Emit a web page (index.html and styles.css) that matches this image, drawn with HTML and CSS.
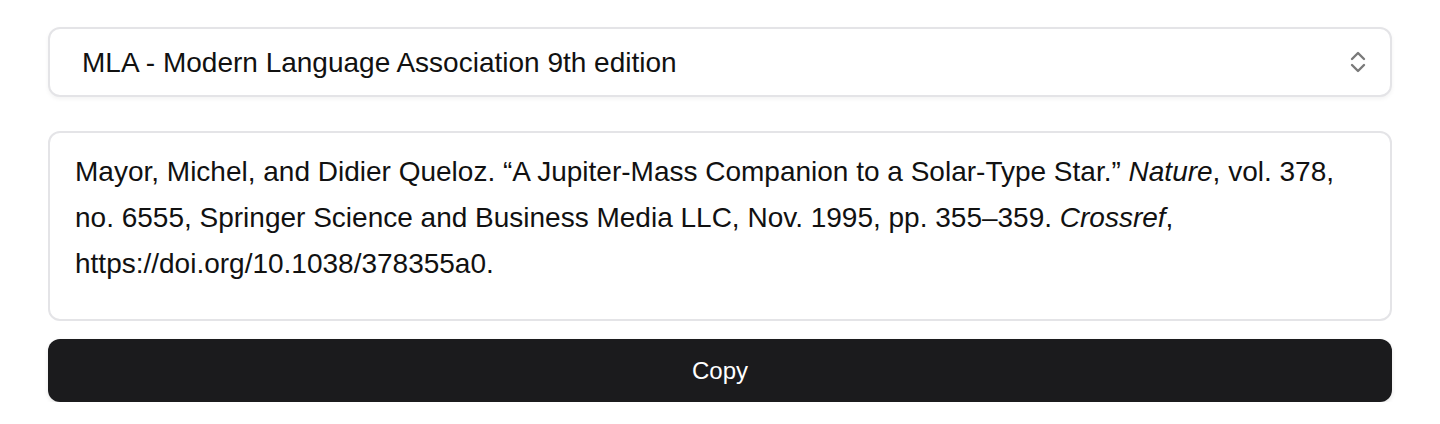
FILE: index.html
```html
<!DOCTYPE html>
<html lang="en">
<head>
    <meta charset="UTF-8">
    <meta name="viewport" content="width=device-width, initial-scale=1.0">
    <title>Citation</title>
    <link rel="stylesheet" href="styles.css">
</head>
<body>
    <div class="cite-box">
        <div class="style-select">
            <select name="style">
                <option value="mla" selected>MLA - Modern Language Association 9th edition</option>
                <option value="apa">APA - American Psychological Association 7th edition</option>
                <option value="chicago">Chicago Manual of Style 17th edition</option>
            </select>
            <svg class="select-icon" width="16" height="24" viewBox="0 0 16 24" fill="none" stroke="#7a7a7a" stroke-width="2.4" stroke-linecap="round" stroke-linejoin="round">
                <path d="M2 9 L8 3 L14 9"/>
                <path d="M2 15 L8 21 L14 15"/>
            </svg>
        </div>

        <div class="citation">
            Mayor, Michel, and Didier Queloz. “A Jupiter-Mass Companion to a Solar-Type Star.” <i>Nature</i>, vol. 378, no. 6555, Springer Science and Business Media LLC, Nov. 1995, pp. 355–359. <i>Crossref</i>, https://doi.org/10.1038/378355a0.
        </div>

        <button type="button" class="copy-btn">Copy</button>
    </div>
</body>
</html>
```

FILE: styles.css
```css
body {
    margin: 0;
    font-family: "Liberation Sans", Arial, sans-serif;
    background: #fff;
    color: #111;
}

.cite-box {
    display: flex;
    flex-direction: column;
    padding: 27px 48px 0 48px;
}

.style-select {
    position: relative;
    margin-bottom: 34px;
}

select {
    appearance: none;
    -webkit-appearance: none;
    width: 100%;
    height: 70px;
    background: #fff;
    border: 2px solid #e4e4e7;
    border-radius: 12px;
    box-shadow: 0 2px 4px rgba(0, 0, 0, 0.05);
    padding: 0 32px;
    font-family: inherit;
    font-size: 28px;
    color: #111;
    outline: none;
}

.select-icon {
    position: absolute;
    right: 26px;
    top: 23px;
    pointer-events: none;
}

.citation {
    box-sizing: border-box;
    height: 190px;
    border: 2px solid #e4e4e7;
    border-radius: 12px;
    padding: 16px 50px 16px 25px;
    font-size: 28px;
    line-height: 46px;
    color: #111;
    margin-bottom: 18px;
}

.copy-btn {
    height: 63px;
    background: #1b1b1d;
    color: #fff;
    border: none;
    border-radius: 12px;
    box-shadow: 0 2px 4px rgba(0, 0, 0, 0.1);
    font-family: inherit;
    font-size: 24px;
    cursor: pointer;
}
```
